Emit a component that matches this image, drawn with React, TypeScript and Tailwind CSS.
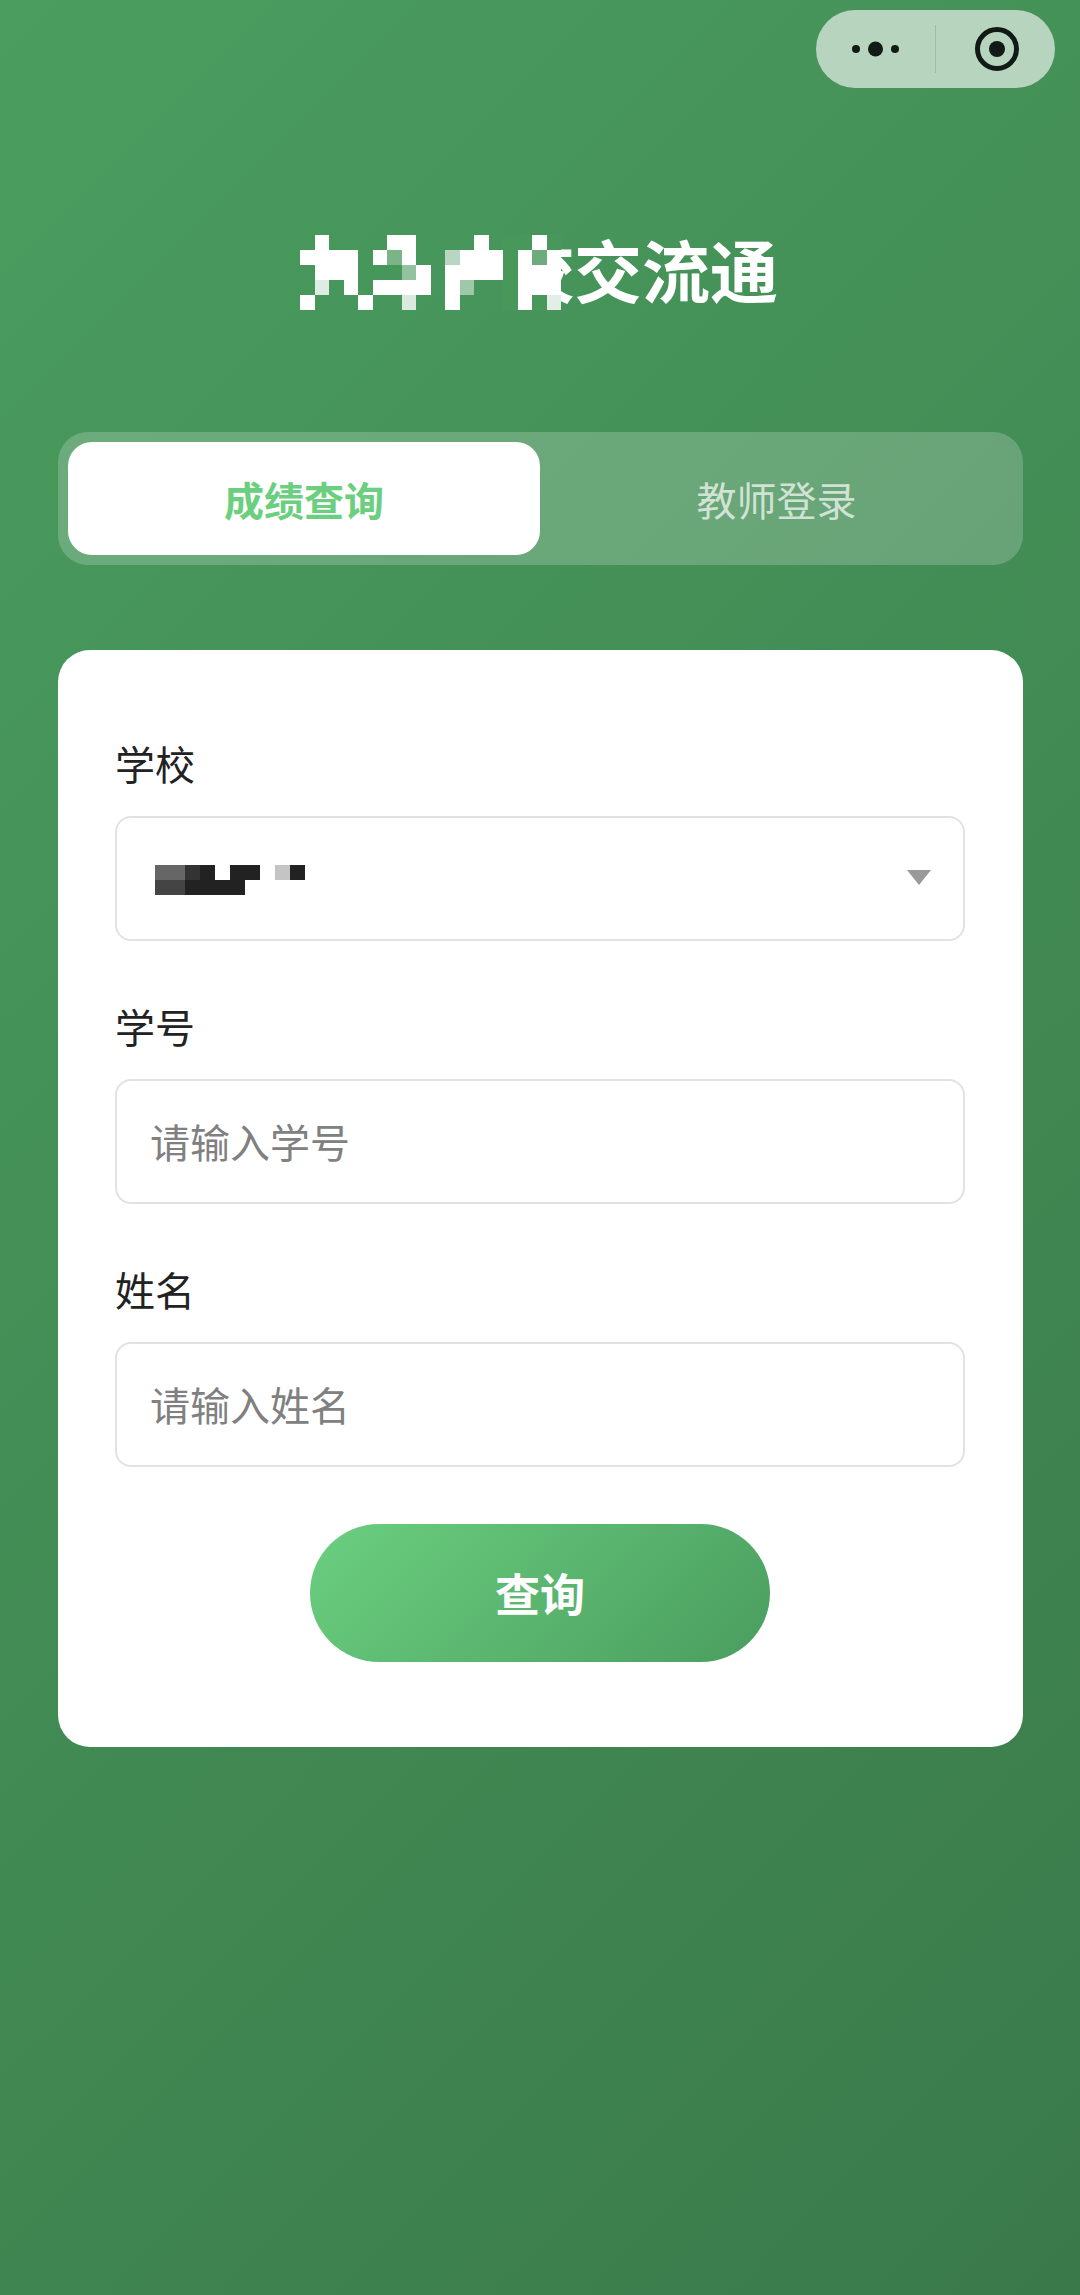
const F = "[font-family:'Noto_Sans_CJK_SC','Noto_Sans',sans-serif]";

type Cell = [number, number, string?];

const titleCells: Cell[] = [
  [1, 0], [6, 0], [7, 0], [12, 0], [16, 0],
  [0, 1], [1, 1], [2, 1], [3, 1], [5, 1], [6, 1, "#7ab588"], [7, 1], [10, 1, "#b9d6c2"], [11, 1], [12, 1], [13, 1], [15, 1], [16, 1, "#6eac7e"], [17, 1],
  [1, 2], [2, 2], [3, 2], [7, 2, "#93c29e"], [8, 2], [10, 2], [11, 2], [12, 2], [13, 2], [15, 2], [16, 2], [17, 2],
  [1, 3, "#dfece3"], [3, 3], [5, 3], [6, 3], [7, 3], [8, 3], [10, 3], [11, 3, "#9ec8a9"], [15, 3], [16, 3], [17, 3],
  [0, 4], [4, 4], [7, 4, "#dbe9df"], [10, 4], [15, 4], [17, 4, "#e3eee7"],
];

const selectCells: Cell[] = [
  [0, 0, "#666666"], [1, 0, "#666666"], [2, 0, "#333333"], [3, 0, "#222222"], [5, 0, "#222222"], [6, 0, "#222222"], [8, 0, "#c4c4c4"], [9, 0, "#222222"],
  [0, 1, "#444444"], [1, 1, "#444444"], [2, 1, "#222222"], [3, 1, "#222222"], [4, 1, "#222222"], [5, 1, "#222222"],
];

function Label({ children, className = "" }: { children: string; className?: string }) {
  return <div className={`h-[56px] leading-[51px] text-[40px] text-[#222222] ${className}`}>{children}</div>;
}

function TextField({ placeholder }: { placeholder: string }) {
  return (
    <input
      placeholder={placeholder}
      className={`mt-[22px] block w-full h-[125px] rounded-[16px] border-2 border-[#e2e2e2] bg-white px-[33px] pb-[2px] text-[40px] text-[#222222] placeholder:text-[#808080] outline-none ${F}`}
    />
  );
}

export default function App() {
  return (
    <div className={`relative w-[1080px] h-[2295px] overflow-hidden bg-[linear-gradient(135deg,#4a9d5f_0%,#3a7a4a_100%)] pl-[58px] pr-[57px] pt-[235px] ${F}`}>
      <div className="absolute left-[816px] top-[10px] w-[239px] h-[78px] rounded-full bg-[#b7d4be] flex items-center">
        <svg width="239" height="78" viewBox="0 0 239 78" fill="none">
          <circle cx="40" cy="39" r="4" fill="#111a14" />
          <circle cx="59.5" cy="39" r="7.5" fill="#111a14" />
          <circle cx="79" cy="39" r="4" fill="#111a14" />
          <rect x="119" y="15" width="1" height="48" fill="#9dbea6" />
          <circle cx="181" cy="39" r="19.5" stroke="#111a14" strokeWidth="5" />
          <circle cx="181" cy="39" r="8" fill="#111a14" />
        </svg>
      </div>

      <div className="flex h-[75px] justify-center items-center pr-[3px]">
        <svg width="261" height="75" viewBox="0 0 261 75" className="shrink-0 relative z-10" shapeRendering="crispEdges">
          <rect x="203" y="0" width="58" height="75" fill="#48985c" />
          {titleCells.map(([c, r, fill], i) => (
            <rect key={i} x={c * 14.5} y={r * 15} width="14.5" height="15" fill={fill ?? "#ffffff"} />
          ))}
        </svg>
        <span className="block ml-[-55px] mb-[8px] whitespace-nowrap text-[68px] leading-[100px] font-bold text-white">校交流通</span>
      </div>

      <div className="mt-[122px] h-[133px] rounded-[30px] bg-white/20 p-[10px] flex">
        <div className="w-[472px] rounded-[24px] bg-white flex items-center justify-center text-[40px] font-bold text-[#6bcf7f]">成绩查询</div>
        <div className="flex-1 flex items-center justify-center text-[40px] text-white/70">教师登录</div>
      </div>

      <div className="mt-[85px] h-[1097px] rounded-[32px] bg-white pl-[57px] pr-[58px] pt-[88px]">
        <Label>学校</Label>
        <div className="mt-[22px] h-[125px] rounded-[16px] border-2 border-[#e2e2e2] flex items-center justify-between pl-[38px] pr-[32px]">
          <svg width="150" height="30" viewBox="0 0 150 30" shapeRendering="crispEdges" className="mt-[2px]">
            {selectCells.map(([c, r, fill], i) => (
              <rect key={i} x={c * 15} y={r * 15} width="15" height="15" fill={fill} />
            ))}
          </svg>
          <svg width="24" height="15" viewBox="0 0 24 15" className="mt-[-3px]">
            <path d="M0 0H24L12 15Z" fill="#999999" />
          </svg>
        </div>

        <Label className="mt-[60px]">学号</Label>
        <TextField placeholder="请输入学号" />

        <Label className="mt-[60px]">姓名</Label>
        <TextField placeholder="请输入姓名" />

        <button className={`mt-[57px] mx-auto block w-[460px] h-[138px] rounded-full bg-[linear-gradient(135deg,#6bcf7f_0%,#4a9d5f_100%)] text-[45px] font-bold text-white ${F}`}>查询</button>
      </div>
    </div>
  );
}
